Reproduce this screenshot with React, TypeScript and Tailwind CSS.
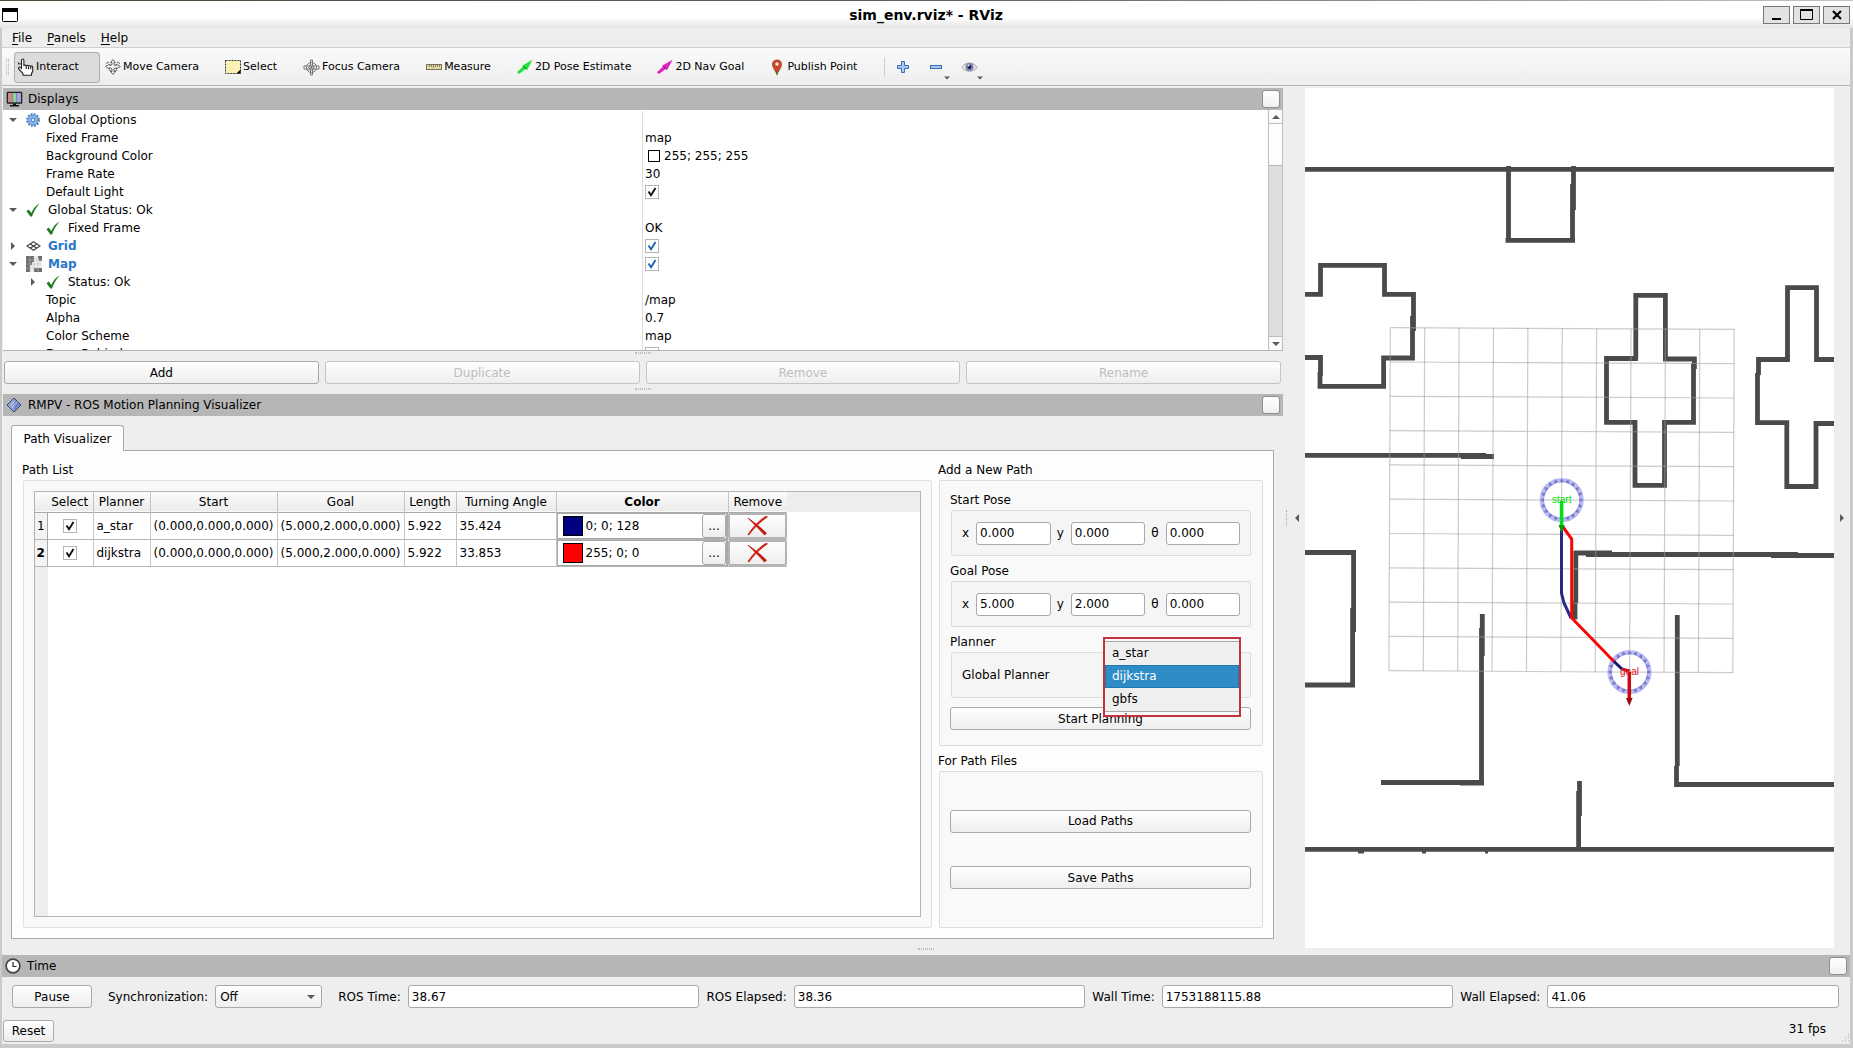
import React from 'react'
import clsx from 'clsx'

const buttonStyle =
  'rounded-[3px] border border-[#a9a9a9] bg-gradient-to-b from-white to-[#eeeeee] text-center text-black disabled:border-[#c4c4c4] disabled:text-[#bebebe]'
const inputStyle = 'h-[23px] rounded-[3px] border border-[#a9a9a9] bg-white px-[3px] text-black outline-none'

/* ---------- icons ---------- */

function HandIcon() {
  return (
    <svg width="17" height="18" viewBox="0 0 17 18" fill="#fff" stroke="#222" strokeWidth="1.1">
      <path d="M4.5 10.5V2.2c0-1.6 2.4-1.6 2.4 0V8c0-1.3 2.3-1.3 2.3.2 0-1.2 2.3-1.2 2.3.3 0-1.2 2.2-1.1 2.2.2 0-.9 2-.8 2 .5v4.3l-1.2 2v1.700H6v-1.700L1.700 11c-.9-1.500.8-2.400 1.600-1.400z" />
      <path d="M9.200 8v3M11.500 8.400v2.800M13.700 8.800v2.500" fill="none" />
      <path d="M1.500 6.500V4.500M3 6.500V5" fill="none" />
    </svg>
  )
}

function MoveIcon() {
  return (
    <svg width="16" height="16" viewBox="0 0 16 16" fill="#f4f4f4" stroke="#555" strokeWidth="0.9">
      <path d="M8 .6 10.400 3.500H9v2.200l2 .9V5l4.400 2.400L11.500 10V8.700L9 9.800v2.700h1.500L8 15.500l-2.500-3H7V9.800L4.500 8.700V10L.6 7.400 5 5v1.600l2-.9V3.500H5.600z" />
      <path d="M1 4.500 4 3M12 3l3 1.500M4 11l3 1.500M12 11l-3 1.500" />
    </svg>
  )
}

function SelectIcon() {
  return (
    <svg width="16" height="16" viewBox="0 0 16 16">
      <rect x="0.500" y="1.500" width="15" height="13" fill="#fbf3b4" stroke="#333" strokeDasharray="2 1" />
      <path d="M15.500 10.500v4h-4z" fill="#000" />
    </svg>
  )
}

function FocusIcon() {
  return (
    <svg width="17" height="17" viewBox="0 0 17 17" fill="none" stroke="#777" strokeWidth="1">
      <circle cx="8.500" cy="8.500" r="5" />
      <circle cx="8.500" cy="8.500" r="2.500" />
      <path d="M7.500 7V1h2v6h6.500v3H9.500v6h-2v-6H1V7z" />
      <circle cx="8.500" cy="8.500" r="1" fill="#777" />
    </svg>
  )
}

function RulerIcon() {
  return (
    <svg width="16" height="16" viewBox="0 0 16 16">
      <rect x="0.500" y="5.500" width="15" height="5" fill="#e3dba6" stroke="#77705a" />
      <path d="M3.500 6v2M5.500 6v2M7.500 6v3M9.500 6v2M11.500 6v2M13.500 6v2" stroke="#77705a" strokeWidth="0.900" />
    </svg>
  )
}

function ArrowIcon({ color }: { color: string }) {
  return (
    <svg width="16" height="16" viewBox="0 0 16 16">
      <path d="M0 13.300 6 7.500 5 6.800 15.500.8 10 11.300 9 9.800 2 15z" fill={color} />
      <path d="m6.500 7.500 3 2.500" stroke="#333" strokeWidth="0.900" />
    </svg>
  )
}

function PinIcon() {
  return (
    <svg width="15" height="17" viewBox="-1 0 15 17">
      <path d="M6 .5c3 0 5 2.200 5 4.800C11 9 7.500 12 6 16.500 4.500 12 1 9 1 5.300 1 2.700 3 .5 6 .5z" fill="#c4492b" />
      <path d="M4.300 12h3.400L6 16.500z" fill="#5e6b2e" />
      <circle cx="6" cy="5" r="1.800" fill="#f6e4dd" />
    </svg>
  )
}

function PlusIcon() {
  return (
    <svg width="14" height="14" viewBox="0 0 14 14">
      <path d="M5.500 1.500h3v4h4v3h-4v4h-3v-4h-4v-3h4z" fill="#a9c8f0" stroke="#3b6db5" />
    </svg>
  )
}

function MinusIcon() {
  return (
    <svg width="14" height="14" viewBox="0 0 14 14">
      <rect x="1.500" y="5.500" width="11" height="3" fill="#a9c8f0" stroke="#3b6db5" />
    </svg>
  )
}

function EyeIcon() {
  return (
    <svg width="17" height="14" viewBox="0 0 17 14">
      <path d="M1 7.500C4 1.500 13 1.500 16 7.500 13 12.500 4 12.500 1 7.500z" fill="#e6e6e6" stroke="#a5a5a5" />
      <circle cx="8.500" cy="7" r="4" fill="#7c82b8" />
      <circle cx="8.500" cy="7" r="1.900" fill="#15173a" />
      <circle cx="7.500" cy="5.500" r="0.900" fill="#fff" />
    </svg>
  )
}

function MonitorIcon() {
  return (
    <svg width="17" height="16" viewBox="0 0 17 16">
      <rect x="0.700" y="0.700" width="15.600" height="12" rx="1" fill="#222" />
      <rect x="2" y="2" width="4.500" height="9.300" fill="#c98a8a" />
      <rect x="6.500" y="2" width="4" height="9.300" fill="#93cf9b" />
      <rect x="10.500" y="2" width="4.500" height="9.300" fill="#a3a3df" />
      <path d="M7 12.500h3V14h3v1.500H4V14h3z" fill="#111" />
    </svg>
  )
}

function GearIcon() {
  return (
    <svg width="14" height="14" viewBox="0 0 14 14" fill="none">
      <circle cx="7" cy="7" r="6" stroke="#3c73b9" strokeWidth="1.600" strokeDasharray="1.900 1.240" />
      <circle cx="7" cy="7" r="5" fill="#8db5e3" stroke="#4a7fc0" strokeWidth="0.800" />
      <circle cx="7" cy="7" r="1.900" fill="#dbe8f7" stroke="#3c73b9" strokeWidth="0.900" />
    </svg>
  )
}

function CheckIcon() {
  return (
    <svg width="15" height="14" viewBox="0 0 15 14">
      <path d="M.5 8.200 2.700 6.600l2.600 3.400C7.200 5.700 9.800 2.600 13.600.3 10.200 4.500 7.800 8.500 6 13.500H4.400z" fill="#1f7a1f" />
    </svg>
  )
}

function GridIcon() {
  return (
    <svg width="15" height="10" viewBox="0 0 15 10" fill="none" stroke="#444" strokeWidth="1.200">
      <path d="M7.500.7 14 5 7.500 9.300 1 5zM4.200 2.900l6.600 4.300M10.800 2.900 4.200 7.200" />
    </svg>
  )
}

function MapIcon() {
  return (
    <svg width="16" height="16" viewBox="0 0 16 16">
      <rect width="16" height="16" fill="#ececec" />
      <path d="M0 0h8v6H6v3H4v7H0zM12 0h4v5h-3V3h-1zM8 12h8v4H8z" fill="#6d6d6d" />
      <path d="M4 0v16M8 0v16M12 0v16M0 4h16M0 8h16M0 12h16" stroke="#bcbcbc" strokeWidth="0.500" />
    </svg>
  )
}

function DiamondIcon() {
  return (
    <svg width="16" height="16" viewBox="0 0 16 16">
      <path d="M8 1 15 8 8 15 1 8z" fill="#93a5d8" stroke="#3a4566" />
      <path d="M8 2v12l6-6z" fill="#6d83c2" />
      <path d="m5 8 4-4M6 11l5-6" stroke="#ccd5f1" strokeWidth="0.900" />
    </svg>
  )
}

function ClockIcon() {
  return (
    <svg width="16" height="16" viewBox="0 0 16 16">
      <circle cx="8" cy="8" r="6.900" fill="#fff" stroke="#444" strokeWidth="1.700" />
      <path d="M8 4v4.500h3.500" fill="none" stroke="#222" strokeWidth="1.200" />
    </svg>
  )
}

function CrossIcon() {
  return (
    <svg width="21" height="20" viewBox="0 0 21 20">
      <path d="M1 2.200C8 6.500 14 12 19.500 17.300L17.500 19C12 13 7 8 1 2.200zM20.500.8C13 6 7 12 1.800 19L1 18.500C6 11 12 4.500 18.500.5z" fill="#c61a0c" stroke="#c61a0c" strokeWidth="0.800" />
    </svg>
  )
}

function Triangle({ dir }: { dir: 'up' | 'down' | 'left' | 'right' }) {
  const paths = { up: 'M0 6 4 2l4 4z', down: 'M0 2h8L4 6z', left: 'M6 0v8L2 4z', right: 'M2 0v8l4-4z' }
  return (
    <svg width="8" height="8" viewBox="0 0 8 8" className="shrink-0">
      <path d={paths[dir]} fill="#5a5a5a" />
    </svg>
  )
}

/* ---------- small widgets ---------- */

function CheckBox({ label, checked = true, blue = false }: { label: string; checked?: boolean; blue?: boolean }) {
  return (
    <span className="relative flex h-[14px] w-[14px]">
      <input
        type="checkbox"
        aria-label={label}
        defaultChecked={checked}
        className="peer h-[14px] w-[14px] appearance-none border border-[#b4b4b4] bg-white"
      />
      <svg viewBox="0 0 14 14" className="pointer-events-none absolute inset-0 hidden peer-checked:block">
        <path
          d="M3.500 6.500 6 10.300 10.500 3"
          fill="none"
          stroke={blue ? '#1c64ae' : '#111'}
          strokeWidth="1.900"
        />
      </svg>
    </span>
  )
}

function Grip() {
  return <div className="mx-auto h-[2px] w-4 border-y border-dotted border-[#bdbdbd]" />
}

function DockTitle({ icon, title }: { icon: React.ReactNode; title: string }) {
  return (
    <div className="flex h-[22px] shrink-0 items-center bg-[#b6b6b6] px-[3px]">
      <span className="flex w-[22px]">{icon}</span>
      <h2 className="flex-1">{title}</h2>
      <button
        aria-label={`Float ${title}`}
        className="h-[18px] w-[18px] rounded-[3px] border border-[#8f8f8f] bg-gradient-to-b from-white to-[#f0f0f0]"
      />
    </div>
  )
}

function ToolButton({ icon, label, active = false }: { icon: React.ReactNode; label: string; active?: boolean }) {
  return (
    <button
      className={clsx(
        'flex h-[31px] items-center gap-[2px] rounded-[3px] border pr-[20px] pl-[2px] text-[11px]',
        active ? 'border-[#adadad] bg-[#dcdcdc]' : 'border-transparent',
      )}
    >
      {icon}
      {label}
    </button>
  )
}

/* ---------- displays panel ---------- */

type Row = {
  name: string
  arrow?: 'down' | 'right'
  icon?: React.ReactNode
  nested?: boolean
  bold?: boolean
  value?: React.ReactNode
}

const displayRows: Row[] = [
  { name: 'Global Options', arrow: 'down', icon: <GearIcon /> },
  { name: 'Fixed Frame', value: 'map' },
  {
    name: 'Background Color',
    value: (
      <>
        <span className="mr-1 ml-[3px] h-[12px] w-[12px] border border-black bg-white" />
        255; 255; 255
      </>
    ),
  },
  { name: 'Frame Rate', value: '30' },
  { name: 'Default Light', value: <CheckBox label="Default Light" /> },
  { name: 'Global Status: Ok', arrow: 'down', icon: <CheckIcon /> },
  { name: 'Fixed Frame', icon: <CheckIcon />, nested: true, value: 'OK' },
  { name: 'Grid', arrow: 'right', icon: <GridIcon />, bold: true, value: <CheckBox label="Grid" blue /> },
  { name: 'Map', arrow: 'down', icon: <MapIcon />, bold: true, value: <CheckBox label="Map" blue /> },
  { name: 'Status: Ok', arrow: 'right', icon: <CheckIcon />, nested: true },
  { name: 'Topic', value: '/map' },
  { name: 'Alpha', value: '0.7' },
  { name: 'Color Scheme', value: 'map' },
  { name: 'Draw Behind', value: <CheckBox label="Draw Behind" checked={false} /> },
]

function DisplayRow({ row }: { row: Row }) {
  return (
    <div className="grid h-[18px] grid-cols-[639fr_626fr]">
      <div className={clsx('flex items-center', row.nested && 'pl-5')}>
        {row.icon ? (
          <>
            <span className="flex w-[23px] pl-[6px]">{row.arrow && <Triangle dir={row.arrow} />}</span>
            <span className="flex w-[22px] items-center">{row.icon}</span>
          </>
        ) : (
          <span className="w-[43px]" />
        )}
        <span className={clsx(row.bold && 'font-bold text-[#2a76c6]')}>{row.name}</span>
      </div>
      <div className="flex items-center border-l border-[#dcdcdc] pl-[2px]">{row.value}</div>
    </div>
  )
}

function DisplaysPanel() {
  return (
    <section>
      <DockTitle icon={<MonitorIcon />} title="Displays" />
      <div className="flex h-[241px] overflow-hidden border-b border-[#b4b4b4] bg-white">
        <div className="flex-1 pt-px">
          {displayRows.map((row, i) => (
            <DisplayRow key={i} row={row} />
          ))}
        </div>
        <div className="flex w-[15px] flex-col border-x border-[#bdbdbd] bg-[#d9d9d9]">
          <button aria-label="Scroll up" className="flex h-[14px] items-center justify-center border-b border-[#bdbdbd] bg-[#fafafa]">
            <Triangle dir="up" />
          </button>
          <div className="h-[42px] border-b border-[#b4b4b4] bg-[#fdfdfd]" />
          <div className="flex-1 bg-[#dedede]" />
          <button aria-label="Scroll down" className="flex h-[14px] items-center justify-center border-t border-[#bdbdbd] bg-[#fafafa]">
            <Triangle dir="down" />
          </button>
        </div>
      </div>
      <div className="flex h-[10px] items-start pt-px">
        <Grip />
      </div>
      <div className="grid grid-cols-4 gap-[6px] pr-[2px] pl-px">
        <button className={clsx(buttonStyle, 'h-[23px]')}>Add</button>
        <button disabled className={clsx(buttonStyle, 'h-[23px]')}>Duplicate</button>
        <button disabled className={clsx(buttonStyle, 'h-[23px]')}>Remove</button>
        <button disabled className={clsx(buttonStyle, 'h-[23px]')}>Rename</button>
      </div>
      <div className="flex h-[10px] items-center">
        <Grip />
      </div>
    </section>
  )
}

/* ---------- path visualizer ---------- */

const paths = [
  { planner: 'a_star', angle: '35.424', color: '0; 0; 128', swatch: 'bg-[#000080]' },
  { planner: 'dijkstra', angle: '33.853', color: '255; 0; 0', swatch: 'bg-[#ff0000]' },
]

const columns = [
  { title: 'Select', width: 'w-[46px]' },
  { title: 'Planner', width: 'w-[57px]' },
  { title: 'Start', width: 'w-[127px]' },
  { title: 'Goal', width: 'w-[127px]' },
  { title: 'Length', width: 'w-[52px]' },
  { title: 'Turning Angle', width: 'w-[100px]' },
  { title: 'Color', width: 'w-[172px]' },
  { title: 'Remove', width: 'w-[59px]' },
]

function PathTable() {
  return (
    <div className="flex flex-1 flex-col border border-[#b4b4b4] bg-white">
      <div className="bg-[linear-gradient(#eeeeee_20px,white_20px)]">
        <table className="w-[752px] table-fixed border-collapse">
          <thead>
            <tr className="h-5 border-b border-[#a9a9a9] bg-gradient-to-b from-[#fbfbfb] to-[#ececec]">
              <td className="w-[12px]" />
              {columns.map((col) => (
                <th
                  key={col.title}
                  className={clsx(
                    col.width,
                    'border-r border-[#c4c4c4] p-0 whitespace-nowrap last:border-r-0',
                    col.title !== 'Color' && 'font-normal',
                  )}
                >
                  {col.title}
                </th>
              ))}
            </tr>
          </thead>
          <tbody className="bg-white">
            {paths.map((path, i) => (
              <tr key={path.planner} className="h-[27px] border-b border-[#b4b4b4]">
                <th className={clsx('border-r border-[#a9a9a9] bg-[#f3f3f3] p-0', i === 0 && 'font-normal')}>{i + 1}</th>
                <td className="border-r border-[#c4c4c4] p-0">
                  <div className="flex justify-center">
                    <CheckBox label={`Select ${path.planner}`} />
                  </div>
                </td>
                <td className="border-r border-[#c4c4c4] p-0 pl-[3px]">{path.planner}</td>
                <td className="border-r border-[#c4c4c4] p-0 pl-[3px]">(0.000,0.000,0.000)</td>
                <td className="border-r border-[#c4c4c4] p-0 pl-[3px]">(5.000,2.000,0.000)</td>
                <td className="border-r border-[#c4c4c4] p-0 pl-[3px]">5.922</td>
                <td className="border-r border-[#c4c4c4] p-0 pl-[3px]">{path.angle}</td>
                <td className="p-0">
                  <div className="flex h-[26px] items-center border border-r-2 border-[#a9a9a9] pl-[5px]">
                    <span className={clsx('mr-[3px] h-5 w-5 border border-black', path.swatch)} />
                    <span className="flex-1">{path.color}</span>
                    <button aria-label={`Pick colour for ${path.planner}`} className={clsx(buttonStyle, 'h-[24px] w-6')}>
                      ...
                    </button>
                  </div>
                </td>
                <td className="p-0">
                  <button
                    aria-label={`Remove ${path.planner}`}
                    className="flex h-[26px] w-full items-center justify-center rounded-[2px] border-2 border-[#b4b4b4] bg-gradient-to-b from-white to-[#eeeeee]"
                  >
                    <CrossIcon />
                  </button>
                </td>
              </tr>
            ))}
          </tbody>
        </table>
      </div>
      <div className="w-[13px] flex-1 bg-[#eeeeee]" />
    </div>
  )
}

function Pose({ title, values }: { title: string; values: [string, string, string] }) {
  return (
    <fieldset>
      <legend className="h-[20px] leading-[20px]">{title}</legend>
      <div className="ml-px flex h-[46px] items-center gap-[6px] rounded-[2px] border border-[#dcdcdc] bg-[#f5f5f5] px-[10px]">
        {['x', 'y', 'θ'].map((axis, i) => (
          <label key={axis} className="flex flex-1 items-center gap-[7px]">
            {axis}
            <input className={clsx(inputStyle, 'w-0 flex-1')} defaultValue={values[i]} />
          </label>
        ))}
      </div>
    </fieldset>
  )
}

function PlannerPopup() {
  return (
    <div className="absolute -top-[16px] right-[9px] h-[80px] w-[138px] border-2 border-[#c4323c] pt-[2px]">
      <ul role="listbox" aria-label="Planners" className="border-y border-[#a9a9a9] bg-[#efefef] leading-[23px]">
        <li role="option" aria-selected="false" className="h-[23px] px-[7px]">a_star</li>
        <li role="option" aria-selected="true" className="h-[23px] border border-[#2378b0] bg-[#308cc6] px-[6px] leading-[21px] text-white">
          dijkstra
        </li>
        <li role="option" aria-selected="false" className="h-[23px] px-[7px]">gbfs</li>
      </ul>
    </div>
  )
}

function PathVisualizer() {
  return (
    <section className="flex flex-1 flex-col">
      <DockTitle icon={<DiamondIcon />} title="RMPV - ROS Motion Planning Visualizer" />
      <div className="flex flex-1 flex-col pt-[9px] pr-[9px] pb-[9px] pl-2">
        <button
          role="tab"
          aria-selected="true"
          className="z-10 -mb-px h-[26px] w-[113px] rounded-t-[3px] border border-b-0 border-[#a9a9a9] bg-[#fdfdfd]"
        >
          Path Visualizer
        </button>
        <div className="flex flex-1 gap-[6px] border border-[#a9a9a9] bg-[#fdfdfd] pt-[9px] pr-[10px] pb-[10px] pl-[10px]">
          <div className="flex flex-1 flex-col">
            <h3 className="h-5 leading-[20px]">Path List</h3>
            <div className="ml-px flex flex-1 flex-col rounded-[2px] border border-[#e0e0e0] bg-[#f9f9f9] p-[10px]">
              <PathTable />
            </div>
          </div>

          <div className="flex w-[325px] flex-col">
            <h3 className="h-5 leading-[20px]">Add a New Path</h3>
            <div className="ml-px flex flex-col rounded-[2px] border border-[#dcdcdc] bg-[#f9f9f9] pt-[9px] pr-[11px] pb-[15px] pl-[10px]">
              <Pose title="Start Pose" values={['0.000', '0.000', '0.000']} />
              <div className="h-[5px]" />
              <Pose title="Goal Pose" values={['5.000', '2.000', '0.000']} />
              <h4 className="mt-[5px] h-5 leading-[20px]">Planner</h4>
              <div className="relative ml-px flex h-[46px] items-center justify-between rounded-[2px] border border-[#dcdcdc] bg-[#f5f5f5] px-[10px]">
                <label htmlFor="planner">Global Planner</label>
                <select id="planner" defaultValue="dijkstra" className={clsx(inputStyle, 'w-[130px]')}>
                  <option>a_star</option>
                  <option>dijkstra</option>
                  <option>gbfs</option>
                </select>
                <PlannerPopup />
              </div>
              <button className={clsx(buttonStyle, 'mt-[9px] h-[23px]')}>Start Planning</button>
            </div>
            <h3 className="mt-[5px] h-5 leading-[20px]">For Path Files</h3>
            <div className="ml-px flex flex-1 flex-col justify-evenly rounded-[2px] border border-[#dcdcdc] bg-[#f9f9f9] py-1 pr-[11px] pl-[10px]">
              <button className={clsx(buttonStyle, 'h-[23px]')}>Load Paths</button>
              <button className={clsx(buttonStyle, 'h-[23px]')}>Save Paths</button>
            </div>
          </div>
        </div>
      </div>
    </section>
  )
}

/* ---------- map view ---------- */

const walls = [
  'M1305 168.300H1834',
  'M1508.500 165V239.300M1505.500 239.300H1575M1573.500 165V209M1572.500 183V241',
  'M1305 293.300H1320.500V264.300H1384.500V293.300H1413.500V330M1412.500 315V357H1383.600V385.300H1320V371M1320.500 375V356.500H1305',
  'M1635.800 357.500V294.300H1665.400V358H1694.400V368M1693.500 362V421.300H1664.500V484.300H1635V421.300H1606.500V357.500H1638',
  'M1834 358.500H1816.500V286.700H1787.500V358.500H1758.500V374M1757.500 372V421.700H1786.800V485.500H1816V422.500H1834',
  'M1305 454.300H1486M1461 455.500H1494',
  'M1305 551.500H1353.600V631M1352.600 607V684H1305',
  'M1612 552H1574M1586 553.500H1798M1771 554.500H1834M1575.800 550V602M1575 600V618.500',
  'M1482.300 613V655M1481.500 627V782H1460M1484 781.500H1381',
  'M1677.300 614V765M1676.500 765V783.500H1834',
  'M1579.500 780V815M1578.600 790V848',
  'M1305 848.300H1834M1358 850H1364M1422 850H1426M1485 850H1488',
]

const gridSteps = [0, 1, 2, 3, 4, 5, 6, 7, 8, 9, 10]
const ringSteps = Array.from({ length: 20 }, (_, i) => i * 18)

function Marker({ x, y, label, color }: { x: number; y: number; label: string; color: string }) {
  return (
    <g transform={`translate(${x} ${y})`}>
      <circle r="19.800" fill="none" stroke="#babaf6" strokeWidth="4.600" />
      {ringSteps.map((deg) => (
        <path key={deg} d="M-2.300-17.800H2.300L0-21.800z" transform={`rotate(${deg})`} fill="#7b78c4" />
      ))}
      <text y="3" textAnchor="middle" fontSize="10" fontFamily="'Liberation Sans', sans-serif" fill={color}>
        {label}
      </text>
    </g>
  )
}

function MapView() {
  return (
    <svg viewBox="1305 87 529 862" preserveAspectRatio="xMidYMin slice" className="h-full w-full bg-white">
      <g fill="none" stroke="#4a4a4a" strokeWidth="4.800">
        {walls.map((d) => (
          <path key={d} d={d} />
        ))}
      </g>
      <g stroke="#a0a0a0" strokeOpacity="0.550" strokeWidth="1.200">
        {gridSteps.map((i) => (
          <React.Fragment key={i}>
            <line x1={1390.300 + i * 34.390} y1={326.700 + i * 0.160} x2={1388.900 + i * 34.390} y2={669.700 + i * 0.200} />
            <line x1={1390.300 - i * 0.140} y1={326.700 + i * 34.300} x2={1734.200 - i * 0.140} y2={328.300 + i * 34.340} />
          </React.Fragment>
        ))}
      </g>
      <Marker x={1561.700} y={499} label="start" color="#00e000" />
      <Marker x={1629.500} y={671} label="goal" color="#e01020" />
      <g fill="none" strokeWidth="3">
        <path d="M1561.500 529V592L1564 602 1571 617" stroke="#2a2a86" />
        <path d="M1563 526 1571.700 538V617L1614 660.500" stroke="#fa0505" />
        <path d="M1614 660.500 1622 668" stroke="#15157a" />
        <path d="M1622 668 1629 670" stroke="#d01018" />
        <path d="M1561.600 500V526" stroke="#00e010" strokeWidth="3.500" />
        <path d="M1629.300 671V698" stroke="#cc0a12" strokeWidth="3.500" />
      </g>
      <path d="M1558.500 524h6.200l-3.100 8z" fill="#0a9a10" />
      <path d="M1626 697h6.600l-3.300 8z" fill="#a3060c" />
    </svg>
  )
}

/* ---------- time panel ---------- */

const clocks = [
  { label: 'ROS Time:', value: '38.67' },
  { label: 'ROS Elapsed:', value: '38.36' },
  { label: 'Wall Time:', value: '1753188115.88' },
  { label: 'Wall Elapsed:', value: '41.06' },
]

function TimePanel() {
  return (
    <footer>
      <DockTitle icon={<ClockIcon />} title="Time" />
      <div className="flex items-center gap-[7px] pt-2 pr-[11px] pl-[10px]">
        <button className={clsx(buttonStyle, 'h-[23px] w-[80px]')}>Pause</button>
        <label htmlFor="sync" className="ml-[9px]">Synchronization:</label>
        <div className="relative mr-[9px]">
          <select id="sync" className={clsx(buttonStyle, 'block h-[23px] w-[107px] appearance-none pl-1 text-left')}>
            <option>Off</option>
          </select>
          <span className="pointer-events-none absolute top-[8px] right-[7px]">
            <Triangle dir="down" />
          </span>
        </div>
        {clocks.map((clock) => (
          <React.Fragment key={clock.label}>
            <label htmlFor={clock.label}>{clock.label}</label>
            <input id={clock.label} className={clsx(inputStyle, 'w-0 flex-1')} defaultValue={clock.value} />
          </React.Fragment>
        ))}
      </div>
      <div className="relative flex items-center justify-between pt-3 pr-6 pb-[2px] pl-px">
        <button className={clsx(buttonStyle, 'h-[22px] w-[51px]')}>Reset</button>
        <span className="pb-1">31 fps</span>
        <svg width="10" height="10" viewBox="0 0 10 10" className="absolute right-0 bottom-0">
          <path d="M8 1h1M5 4h1M8 4h1M2 7h1M5 7h1M8 7h1" stroke="#a9a9a9" />
        </svg>
      </div>
    </footer>
  )
}

/* ---------- window ---------- */

export default function App() {
  return (
    <div className="flex min-h-screen flex-col bg-[#eeeeee] font-['DejaVu_Sans',sans-serif] text-[12px] leading-[18px] text-black">
      <div className="h-px bg-gradient-to-r from-[#4a4a38] via-[#606060] to-[#c4c4c4]" />
      <header className="flex h-[27px] items-center bg-gradient-to-b from-white from-60% to-[#e4e4e4] pr-[3px] pl-[2px]">
        <div className="flex flex-1">
          <svg width="16" height="14" viewBox="0 0 16 14">
            <rect x="0.500" y="0.500" width="15" height="13" rx="1" fill="#fff" stroke="#000" />
            <rect width="16" height="4" fill="#000" />
          </svg>
        </div>
        <h1 className="text-[14px] font-bold">sim_env.rviz* - RViz</h1>
        <div className="flex flex-1 justify-end gap-[3px]">
          <button aria-label="Minimize" className="flex h-[18px] w-[27px] items-center justify-center border border-[#777] bg-[#e2e2e2]">
            <svg width="13" height="12"><path d="M2 10h9" stroke="#000" strokeWidth="2" /></svg>
          </button>
          <button aria-label="Maximize" className="flex h-[18px] w-[27px] items-center justify-center border border-[#777] bg-[#e2e2e2]">
            <svg width="13" height="11"><path d="M.5 1.500h12v9H.5z" fill="none" stroke="#000" /><path d="M0 1h13" stroke="#000" strokeWidth="2" /></svg>
          </button>
          <button aria-label="Close" className="flex h-[18px] w-[27px] items-center justify-center border border-[#777] bg-[#e2e2e2]">
            <svg width="10" height="10"><path d="m1 1 8 8M9 1 1 9" stroke="#000" strokeWidth="2.200" /></svg>
          </button>
        </div>
      </header>

      <div className="flex flex-1 flex-col border-r-[3px] border-b-4 border-l-2 border-[#cacaca]">
        <nav className="flex h-5 items-center gap-[15px] border-b border-[#d0d0d0] pl-[10px]">
          <button><span className="underline underline-offset-2">F</span>ile</button>
          <button><span className="underline underline-offset-2">P</span>anels</button>
          <button><span className="underline underline-offset-2">H</span>elp</button>
        </nav>

        <div className="flex h-[38px] items-center gap-[2px] border-b border-[#b4b4b4] bg-gradient-to-b from-[#fafafa] to-[#eeeeee] pt-px pl-1">
          <div className="mr-[3px] h-4 w-[3px] border-x border-dotted border-[#b4b4b4]" />
          <ToolButton icon={<HandIcon />} label="Interact" active />
          <ToolButton icon={<MoveIcon />} label="Move Camera" />
          <ToolButton icon={<SelectIcon />} label="Select" />
          <ToolButton icon={<FocusIcon />} label="Focus Camera" />
          <ToolButton icon={<RulerIcon />} label="Measure" />
          <ToolButton icon={<ArrowIcon color="#1fe43c" />} label="2D Pose Estimate" />
          <ToolButton icon={<ArrowIcon color="#e41fc4" />} label="2D Nav Goal" />
          <ToolButton icon={<PinIcon />} label="Publish Point" />
          <div className="mx-1 h-5 w-px bg-[#cfcfcf]" />
          <button aria-label="Add tool" className="flex h-6 w-6 items-center justify-center"><PlusIcon /></button>
          <button aria-label="Remove tool" className="relative ml-[7px] flex h-6 w-6 items-center justify-center">
            <MinusIcon />
            <span className="absolute -right-[3px] -bottom-[3px] scale-75"><Triangle dir="down" /></span>
          </button>
          <button aria-label="View tools" className="relative ml-[7px] flex h-6 w-6 items-center justify-center">
            <EyeIcon />
            <span className="absolute -right-[3px] -bottom-[3px] scale-75"><Triangle dir="down" /></span>
          </button>
        </div>

        <main className="grid flex-1 grid-cols-[1281fr_567fr] pt-[2px]">
          <div className="flex flex-col pl-px">
            <DisplaysPanel />
            <PathVisualizer />
          </div>
          <div className="flex">
            <button aria-label="Collapse left docks" className="flex w-[22px] items-center justify-between pr-1 pl-[3px]">
              <span className="h-4 border-l border-dotted border-[#a9a9a9]" />
              <Triangle dir="left" />
            </button>
            <div className="relative flex-1">
              <div className="absolute inset-0">
                <MapView />
              </div>
            </div>
            <button aria-label="Collapse right docks" className="flex w-4 items-center justify-center">
              <Triangle dir="right" />
            </button>
          </div>
        </main>
        <div className="flex h-[7px] items-start">
          <div className="w-full"><Grip /></div>
        </div>
        <TimePanel />
      </div>
    </div>
  )
}
